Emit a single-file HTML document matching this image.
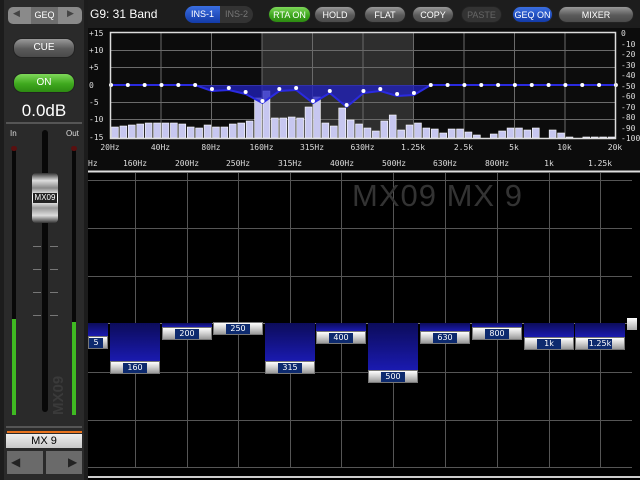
<!DOCTYPE html>
<html><head><meta charset="utf-8">
<style>
*{margin:0;padding:0;box-sizing:border-box}
body{width:640px;height:480px;background:#000;position:relative;overflow:hidden;font-family:"Liberation Sans",sans-serif}
.a{position:absolute}
.btn{position:absolute;height:17px;border-radius:9px;font-size:9px;color:#fff;text-align:center;line-height:17px;background:linear-gradient(#9a9a9a,#5a5a5a 55%,#4a4a4a);border:1px solid #222}
.lbl{position:absolute;font-size:8px;color:#ddd;font-family:"DejaVu Sans Mono","Liberation Mono",monospace}
.hd{position:absolute;height:13px;background:linear-gradient(#fff,#cfcfcf 50%,#9a9a9a);border:1px solid #777}
.hd span{position:absolute;left:12px;right:12px;top:1px;height:10px;background:#0d2a6e;color:#fff;font-size:8px;line-height:10px;text-align:center;font-family:"DejaVu Sans",sans-serif}
.bl{position:absolute;background:linear-gradient(#0c0c5a,#1a1ab0)}
</style></head><body>
<!-- left panel -->
<div class="a" style="left:0;top:0;width:88px;height:480px;background:#1c1c1c"></div>
<div class="a" style="left:4px;top:0;width:80px;height:480px;background:#2a2a2a"></div>
<div class="a" style="left:8px;top:7px;width:74px;height:17px;border-radius:5px;background:#8a8a8a"></div>
<div class="a" style="left:31px;top:7px;width:27px;height:17px;background:#6e6e6e;color:#fff;font-size:9px;text-align:center;line-height:17px">GEQ</div>
<div class="a" style="left:13px;top:8px;color:#444;font-size:9px">◀</div>
<div class="a" style="left:67px;top:8px;color:#444;font-size:9px">▶</div>
<div class="btn" style="left:13px;top:38px;width:62px;height:20px;line-height:18px;font-size:10px">CUE</div>
<div class="btn" style="left:13px;top:73px;width:62px;height:20px;line-height:18px;font-size:10px;background:linear-gradient(#7fd85a,#3ea81e 55%,#2d8a12)">ON</div>
<div class="a" style="left:0;width:88px;top:101px;text-align:center;color:#fff;font-size:17px">0.0dB</div>
<div class="a" style="left:6px;top:122px;width:76px;height:2px;background:#555"></div>
<div class="a" style="left:10px;top:129px;color:#ddd;font-size:8px">In</div>
<div class="a" style="left:66px;top:129px;color:#ddd;font-size:8px">Out</div>
<div class="a" style="left:12px;top:147px;width:4px;height:268px;background:#080808"></div>
<div class="a" style="left:11px;top:146px;width:6px;height:5px;border-radius:3px;background:#5a1010"></div>
<div class="a" style="left:12px;top:319px;width:4px;height:96px;background:#3fba22"></div>
<div class="a" style="left:72px;top:147px;width:4px;height:268px;background:#080808"></div>
<div class="a" style="left:71px;top:146px;width:6px;height:5px;border-radius:3px;background:#5a1010"></div>
<div class="a" style="left:72px;top:322px;width:4px;height:93px;background:#3fba22"></div>
<div class="a" style="left:42px;top:130px;width:6px;height:282px;border-radius:3px;background:#080808"></div>
<div class="a" style="left:33px;top:246px;width:8px;height:1px;background:#777;box-shadow:0 23px #777,0 46px #777,0 69px #777"></div>
<div class="a" style="left:50px;top:246px;width:8px;height:1px;background:#777;box-shadow:0 23px #777,0 46px #777,0 69px #777"></div>
<div class="a" style="left:32px;top:173px;width:26px;height:50px;border-radius:4px;background:linear-gradient(#333,#ddd 15%,#888 30%,#fff 45%,#fff 55%,#999 70%,#ddd 85%,#333)"></div>
<div class="a" style="left:33px;top:193px;width:24px;height:10px;background:#222;color:#fff;font-size:8px;text-align:center;line-height:10px">MX09</div>
<div class="a" style="left:50px;top:372px;color:#3a3a3a;font-size:15px;font-weight:bold;transform:rotate(-90deg);transform-origin:left top;top:415px">MX09</div>
<div class="a" style="left:6px;top:426px;width:76px;height:2px;background:#555"></div>
<div class="a" style="left:7px;top:431px;width:75px;height:2px;background:#e8731e"></div>
<div class="a" style="left:6px;top:434px;width:76px;height:14px;background:linear-gradient(#eee,#c8c8c8);color:#000;font-size:11px;text-align:center;line-height:14px">MX 9</div>
<div class="a" style="left:7px;top:451px;width:36px;height:23px;background:#6a6a6a;color:#222;font-size:12px;padding:4px 0 0 4px">◀</div>
<div class="a" style="left:46px;top:451px;width:36px;height:23px;background:#6a6a6a;color:#222;font-size:12px;padding:4px 0 0 22px">▶</div>
<!-- top bar -->
<div class="a" style="left:88px;top:0;width:552px;height:28px;background:#1d1d1d"></div>
<div class="a" style="left:90px;top:7px;color:#fff;font-size:12px">G9: 31 Band</div>
<div class="a" style="left:185px;top:6px;width:68px;height:17px;border-radius:9px;background:#333;overflow:hidden">
 <div class="a" style="left:0;top:0;width:35px;height:17px;background:linear-gradient(#3a6ee0,#123aa8);color:#fff;font-size:9px;text-align:center;line-height:17px">INS-1</div>
 <div class="a" style="left:35px;top:0;width:33px;height:17px;color:#777;font-size:9px;text-align:center;line-height:17px">INS-2</div>
</div>
<div class="btn" style="left:268px;top:6px;width:43px;background:linear-gradient(#7fd85a,#3ea81e 55%,#2d8a12)">RTA ON</div>
<div class="btn" style="left:314px;top:6px;width:42px">HOLD</div>
<div class="btn" style="left:364px;top:6px;width:42px">FLAT</div>
<div class="btn" style="left:412px;top:6px;width:42px">COPY</div>
<div class="btn" style="left:461px;top:6px;width:41px;background:#333;color:#666">PASTE</div>
<div class="btn" style="left:512px;top:6px;width:41px;background:linear-gradient(#3a6ee0,#123aa8)">GEQ ON</div>
<div class="btn" style="left:558px;top:6px;width:76px">MIXER</div>
<!-- RTA graph -->
<div class="a" style="left:88px;top:28px;width:552px;height:143px;background:#0c0c0c"></div>
<svg class="a" style="left:0;top:0" width="640" height="480" id="s">
 <rect x="262" y="33" width="151" height="105" fill="#2e2e2e"/>
 <g id="grid" stroke="#6a6a6a" stroke-width="1"></g>
 <g id="bars" fill="#c7c7f0" stroke="#fff" stroke-width="0.6"></g>
 <path id="eqf" fill="#2020c0" fill-opacity="0.75"/>
 <path id="eql" fill="none" stroke="#2a2ae0" stroke-width="2"/>
 <g id="dots" fill="#fff"></g>
 <rect x="110.5" y="32.5" width="505" height="106" fill="none" stroke="#ddd" stroke-width="1.5"/>
 <line x1="88" y1="171.5" x2="640" y2="171.5" stroke="#ddd" stroke-width="2"/>
 <g id="grid2" stroke="#555" stroke-width="1"></g>
 <line x1="88" y1="477" x2="640" y2="477" stroke="#ccc" stroke-width="2"/>
</svg>
<div class="lbl" style="left:89px;top:29px">+15</div>
<div class="lbl" style="left:89px;top:46px">+10</div>
<div class="lbl" style="left:89px;top:63px">+5</div>
<div class="lbl" style="left:89px;top:81px">0</div>
<div class="lbl" style="left:89px;top:98px">-5</div>
<div class="lbl" style="left:89px;top:115px">-10</div>
<div class="lbl" style="left:89px;top:133px">-15</div>
<div id="rl"></div>
<div id="fl"></div>
<div class="a" style="left:352px;top:178px;color:#333;font-size:31px;letter-spacing:1px">MX09 MX 9</div>
<div id="eqb"></div>
<div class="a" style="left:627px;top:318px;width:10px;height:12px;background:linear-gradient(#fff,#aaa)"></div>
<div class="a" style="left:632px;top:0;width:8px;height:480px;background:#1c1c1c;display:none"></div>
<script>
var N='http://www.w3.org/2000/svg';
function el(p,t,a){var e=document.createElementNS(N,t);for(var k in a)e.setAttribute(k,a[k]);document.getElementById(p).appendChild(e);}
for(var i=1;i<10;i++){var x=110.5+i*50.5;el('grid','line',{x1:x,y1:33,x2:x,y2:138});}
[50,67,85,102,119].forEach(function(y){el('grid','line',{x1:111,y1:y+.5,x2:615,y2:y+.5});});
var tops=[127,126,125,124,123,123,123,123,124,127,128,125,127,127,124,123,121,98,91,118,118,117,118,107,97,123,126,108,120,124,128,131,121,115,130,125,123,128,129,133,129,129,132,135,138,134,131,128,128,130,128,138,130,133,137,138,137,137,137,137];
var w=505/60;
tops.forEach(function(t,i){el('bars','rect',{x:111+i*w+.5,y:t,width:w-1.5,height:138-t});});
var dy=[85,85,85,85,85,85,89,88,92,101,89,88,101,91,105,91,89,94,93,85,85,85,85,85,85,85,85,85,85,85,85];
var pts=dy.map(function(y,i){return [111+i*16.83,y];});
var d='M'+pts.map(function(p){return p[0]+','+(p[1]>85?p[1]+2:p[1]);}).join(' L');
document.getElementById('eql').setAttribute('d',d);
document.getElementById('eqf').setAttribute('d','M111,85 '+d.replace('M','L')+' L615,85 Z');
pts.forEach(function(p){el('dots','circle',{cx:p[0],cy:p[1],r:2});});
var rl='';['0','-10','-20','-30','-40','-50','-60','-70','-80','-90','-100'].forEach(function(t,i){rl+='<div class="lbl" style="left:621px;top:'+(29+i*10.5)+'px">'+t+'</div>';});
document.getElementById('rl').innerHTML=rl;
var fl='';['20Hz','40Hz','80Hz','160Hz','315Hz','630Hz','1.25k','2.5k','5k','10k','20k'].forEach(function(t,i){var x=110+i*50.5;fl+='<div class="lbl" style="left:'+(x-20)+'px;width:40px;text-align:center;top:143px">'+t+'</div>';});
[['Hz',88],['160Hz',135],['200Hz',187],['250Hz',238],['315Hz',290],['400Hz',342],['500Hz',394],['630Hz',445],['800Hz',497],['1k',549],['1.25k',600]].forEach(function(a){fl+=a[1]==88?'<div class="lbl" style="left:88px;top:159px">Hz</div>':'<div class="lbl" style="left:'+(a[1]-20)+'px;width:40px;text-align:center;top:159px">'+a[0]+'</div>';});
document.getElementById('fl').innerHTML=fl;
[135,187,238,290,341,393,445,497,549,600].forEach(function(x){el('grid2','line',{x1:x+.5,y1:173,x2:x+.5,y2:467});});
[180,228,276,372,420,467].forEach(function(y){el('grid2','line',{x1:88,y1:y+.5,x2:632,y2:y+.5});});
el('grid2','line',{x1:88,y1:323.5,x2:632,y2:323.5,stroke:'#777'});
var bands=[['5',83,336],['160',135,361],['200',187,327],['250',238,322],['315',290,361],['400',341,331],['500',393,370],['630',445,331],['800',497,327],['1k',549,337],['1.25k',600,337]];
var h='';bands.forEach(function(b){var l=b[1]-25,wd=50;if(l<88){wd-=88-l;l=88;}
if(b[2]>323)h+='<div class="bl" style="left:'+l+'px;top:323px;width:'+wd+'px;height:'+(b[2]-323)+'px"></div>';
h+='<div class="hd" style="left:'+l+'px;top:'+b[2]+'px;width:'+wd+'px"><span'+(b[1]<100?' style="left:0;right:4px"':'')+'>'+b[0]+'</span></div>';});
document.getElementById('eqb').innerHTML=h;
</script>
</body></html>
